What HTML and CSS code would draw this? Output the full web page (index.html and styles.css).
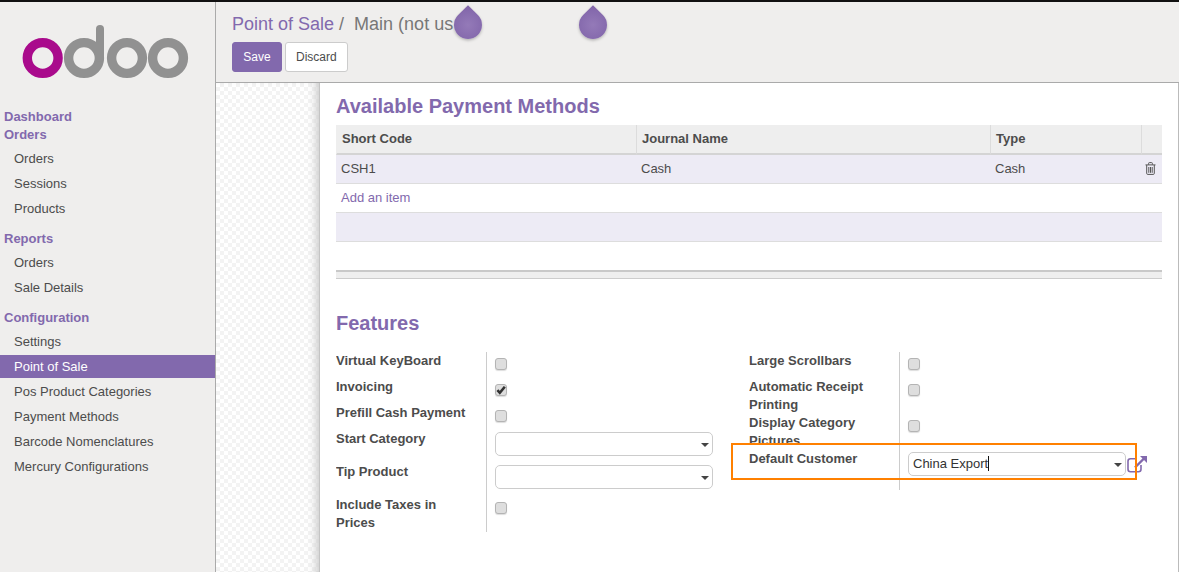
FILE: index.html
```html
<!DOCTYPE html>
<html lang="en">
<head>
  <meta charset="UTF-8" />
  <title>Point of Sale</title>
  <link rel="stylesheet" href="styles.css">
</head>
<body>
  <div class="app">
    <aside class="sidebar">
      <svg class="logo" width="215" height="96" viewBox="0 0 215 96">
        <circle cx="42.7" cy="56" r="15.4" fill="none" stroke="#a90a8c" stroke-width="9.4"/>
        <circle cx="84" cy="56" r="15.4" fill="none" stroke="#919191" stroke-width="9.4"/>
        <path d="M100 56V27" fill="none" stroke="#919191" stroke-width="8" stroke-linecap="round"/>
        <circle cx="127" cy="56" r="15.4" fill="none" stroke="#919191" stroke-width="9.4"/>
        <circle cx="168" cy="56" r="15.4" fill="none" stroke="#919191" stroke-width="9.4"/>
      </svg>
      <div class="menu-head">Dashboard</div>
      <div class="menu-head">Orders</div>
      <ul class="menu">
        <li>Orders</li>
        <li>Sessions</li>
        <li>Products</li>
      </ul>
      <div class="menu-head">Reports</div>
      <ul class="menu">
        <li>Orders</li>
        <li>Sale Details</li>
      </ul>
      <div class="menu-head">Configuration</div>
      <ul class="menu">
        <li>Settings</li>
        <li class="active">Point of Sale</li>
        <li>Pos Product Categories</li>
        <li>Payment Methods</li>
        <li>Barcode Nomenclatures</li>
        <li>Mercury Configurations</li>
      </ul>
    </aside>

    <main class="main">
      <div class="panel">
        <div class="crumbs"><a>Point of Sale</a><span class="sep"> / </span><span class="current">Main (not us</span></div>
        <div class="buttons">
          <button class="btn btn-primary">Save</button>
          <button class="btn">Discard</button>
        </div>
      </div>

      <div class="content">
        <div class="pattern"></div>
        <div class="sheet">
          <h2 class="title-payment">Available Payment Methods</h2>
          <table class="list">
            <colgroup>
              <col class="c1"><col class="c2"><col class="c3"><col class="c4">
            </colgroup>
            <thead>
              <tr><th>Short Code</th><th>Journal Name</th><th>Type</th><th></th></tr>
            </thead>
            <tbody>
              <tr class="odd">
                <td>CSH1</td><td>Cash</td><td>Cash</td>
                <td class="trash">
                  <svg width="11" height="13" viewBox="0 0 11 13">
                    <path d="M.5 2.9h10M3.6 2.7V1.4q0-.8.8-.8h2.2q.8 0 .8.8v1.3M1.7 3v8.4q0 1 1 1h5.6q1 0 1-1V3M3.800 5v5.800M5.500 5v5.800M7.200 5v5.800" fill="none" stroke="#555" stroke-width="1"/>
                  </svg>
                </td>
              </tr>
              <tr><td colspan="4"><a class="add">Add an item</a></td></tr>
              <tr class="odd"><td colspan="4"></td></tr>
              <tr class="spacer"><td colspan="4"></td></tr>
            </tbody>
            <tfoot>
              <tr><td colspan="4"></td></tr>
            </tfoot>
          </table>

          <h2 class="title-features">Features</h2>
          <div class="features">
            <div class="group">
              <label class="h26">Virtual KeyBoard</label>
              <div class="ctl"><span class="check"></span></div>
              <label class="h26">Invoicing</label>
              <div class="ctl">
                <span class="check">
                  <svg width="12" height="12" viewBox="0 0 12 12"><path d="M2.400 6.200l2.400 2.600L9.800 2.700" fill="none" stroke="#333" stroke-width="2.600"/></svg>
                </span>
              </div>
              <label class="h26">Prefill Cash Payment</label>
              <div class="ctl"><span class="check"></span></div>
              <label class="h33">Start Category</label>
              <div class="ctl"><div class="select"></div></div>
              <label class="h33">Tip Product</label>
              <div class="ctl"><div class="select"></div></div>
              <label class="h36">Include Taxes in Prices</label>
              <div class="ctl"><span class="check"></span></div>
            </div>

            <div class="group">
              <label class="h26">Large Scrollbars</label>
              <div class="ctl"><span class="check"></span></div>
              <label class="h36">Automatic Receipt Printing</label>
              <div class="ctl"><span class="check"></span></div>
              <label class="h31">Display Category Pictures</label>
              <div class="ctl"><span class="check"></span></div>
              <label class="h45">Default Customer</label>
              <div class="ctl ctl-customer">
                <div class="select">China Export<span class="cursor"></span></div>
                <svg class="ext" width="21" height="18" viewBox="0 0 21 18">
                  <path d="M9.500 3.700H3.500q-2.500 0-2.500 2.500v8q0 2.500 2.500 2.500h8q2.500 0 2.500-2.500V10" fill="none" stroke="#8269ad" stroke-width="1.600"/>
                  <path d="M8 12.500L17 3.500" fill="none" stroke="#8269ad" stroke-width="2.400"/>
                  <path d="M13 1h7v7z" fill="#8269ad"/>
                </svg>
              </div>
            </div>
          </div>
        </div>
      </div>
    </main>
  </div>

  <!-- overlays from the screen recording -->
  <div class="drop drop-a"></div>
  <div class="drop drop-b"></div>
  <div class="highlight"></div>
</body>
</html>
```

FILE: styles.css
```css
* {
  box-sizing: border-box;
}

html, body {
  height: 100%;
}

body {
  margin: 0;
  overflow: hidden;
  border-top: 2px solid #111;
  background: #fff;
  color: #4c4c4c;
  font-family: "Liberation Sans", Arial, sans-serif;
  font-size: 13px;
}

.app {
  display: flex;
  height: 570px;
}

/* sidebar */
.sidebar {
  flex: 0 0 216px;
  background: #efeeed;
  border-right: 1px solid #aaa;
}

.logo {
  display: block;
  margin-bottom: 10px;
}

.menu-head {
  padding-left: 4px;
  height: 18px;
  line-height: 18px;
  font-weight: bold;
  color: #8269ad;
}

.menu {
  list-style: none;
  margin: 2px 0 9px;
  padding: 0;
}

.menu li {
  height: 25px;
  padding-left: 14px;
  line-height: 25px;
}

.menu li.active {
  height: 23px;
  margin: 1px 0;
  line-height: 23px;
  background: #8269ad;
  color: #fff;
}

/* top panel */
.main {
  flex: 1;
  display: flex;
  flex-direction: column;
  min-width: 0;
}

.panel {
  height: 81px;
  padding: 11px 16px 0;
  background: #efeeed;
  border-bottom: 1px solid #aaa;
}

.crumbs {
  height: 22px;
  line-height: 22px;
  font-size: 18px;
  color: #777;
}

.crumbs a {
  color: #8269ad;
}

.crumbs .sep {
  white-space: pre;
}

.crumbs .current {
  margin-left: 5px;
}

.buttons {
  display: flex;
  gap: 3px;
  margin-top: 7px;
}

.btn {
  height: 30px;
  padding: 0 10px;
  border: 1px solid #ccc;
  border-radius: 3px;
  background: #fff;
  color: #4c4c4c;
  font-family: inherit;
  font-size: 12px;
}

.btn-primary {
  width: 50px;
  border-color: #8269ad;
  background: #8269ad;
  color: #fff;
}

/* sheet */
.content {
  flex: 1;
  display: flex;
  min-height: 0;
}

.pattern {
  flex: 0 0 103px;
  background: repeating-conic-gradient(#f3f3f3 0 25%, #fff 0 50%) 0 0 / 8px 8px;
  box-shadow: inset -9px 0 8px -6px #ccc;
}

.sheet {
  flex: 1;
  padding: 11px 16px 0;
  border-left: 1px solid #c4c4c4;
  border-right: 1px solid #bbb;
  background: #fff;
}

h2 {
  margin: 0;
  height: 24px;
  line-height: 24px;
  font-size: 20px;
  color: #8269ad;
}

.title-payment {
  margin-bottom: 7px;
}

.title-features {
  margin-top: 32px;
  margin-bottom: 17px;
}

/* payment table */
.list {
  width: 826px;
  border-collapse: separate;
  border-spacing: 0;
  table-layout: fixed;
}

.c1 { width: 300px; }
.c2 { width: 354px; }
.c3 { width: 151px; }
.c4 { width: 21px; }

.list th {
  height: 30px;
  padding: 0 5px 2px;
  background: #eee;
  border-left: 1px solid #dcdcdc;
  border-bottom: 2px solid #d4d4d4;
  text-align: left;
  font-weight: bold;
}

.list th:first-child {
  border-left-color: #eee;
}

.list td {
  height: 29px;
  padding: 0 5px 2px;
  border-bottom: 1px solid #ddd;
}

.list tr.odd td {
  background: #edebf5;
}

.list .add {
  color: #8269ad;
}

.list td.trash {
  padding: 0 0 2px 4px;
}

.trash svg {
  display: block;
}

.list tr.spacer td {
  height: 28px;
  border-bottom: 0;
}

.list tfoot td {
  height: 9px;
  padding: 0;
  background: #eee;
  border-top: 2px solid #c8c8c8;
  border-bottom: 1px solid #ccc;
}

/* feature form */
.features {
  display: flex;
}

.group {
  display: grid;
  grid-template-columns: 151px 1fr;
  flex: 0 0 413px;
  align-content: start;
}

.group label {
  padding-right: 16px;
  line-height: 18px;
  font-weight: bold;
  border-right: 1px solid #ccc;
  overflow: hidden;
}

.h26 { height: 26px; }
.h31 { height: 31px; }
.h33 { height: 33px; }
.h36 { height: 36px; }
.h45 { height: 45px; padding-top: 5px; }

.ctl {
  padding-left: 8px;
}

.ctl-customer {
  display: flex;
  align-items: flex-start;
}

.check {
  display: block;
  width: 12px;
  height: 12px;
  margin-top: 6px;
  border: 1px solid #b4b4b4;
  border-radius: 3px;
  background: #dedede;
  box-shadow: 0 1px 1px #ddd;
}

.check svg {
  display: block;
  margin: -1px;
}

.select {
  position: relative;
  flex: none;
  width: 218px;
  height: 24px;
  margin-top: 2px;
  padding-left: 4px;
  border: 1px solid #ccc;
  border-radius: 5px;
  background: #fff;
  color: #333;
  line-height: 22px;
}

.select::after {
  content: "";
  position: absolute;
  right: 3px;
  top: 10px;
  border-top: 4px solid #444;
  border-left: 4px solid transparent;
  border-right: 4px solid transparent;
}

.ctl-customer .select {
  margin-top: 7px;
}

.cursor {
  display: inline-block;
  width: 1px;
  height: 15px;
  background: #111;
  vertical-align: -3px;
}

.ext {
  flex: none;
  margin: 10px 0 0 1px;
}

/* overlays */
.drop {
  position: absolute;
  top: 11px;
  width: 28px;
  height: 28px;
  border-radius: 50% 0 50% 50%;
  background: radial-gradient(circle, #947ab8, #8064a9);
  box-shadow: -1px 1px 3px rgba(0, 0, 0, 0.25);
  transform: rotate(-45deg);
}

.drop-a {
  left: 454px;
}

.drop-b {
  left: 579px;
}

.highlight {
  position: absolute;
  left: 731px;
  top: 443px;
  width: 406px;
  height: 37px;
  border: 2px solid #ff8000;
}
```
